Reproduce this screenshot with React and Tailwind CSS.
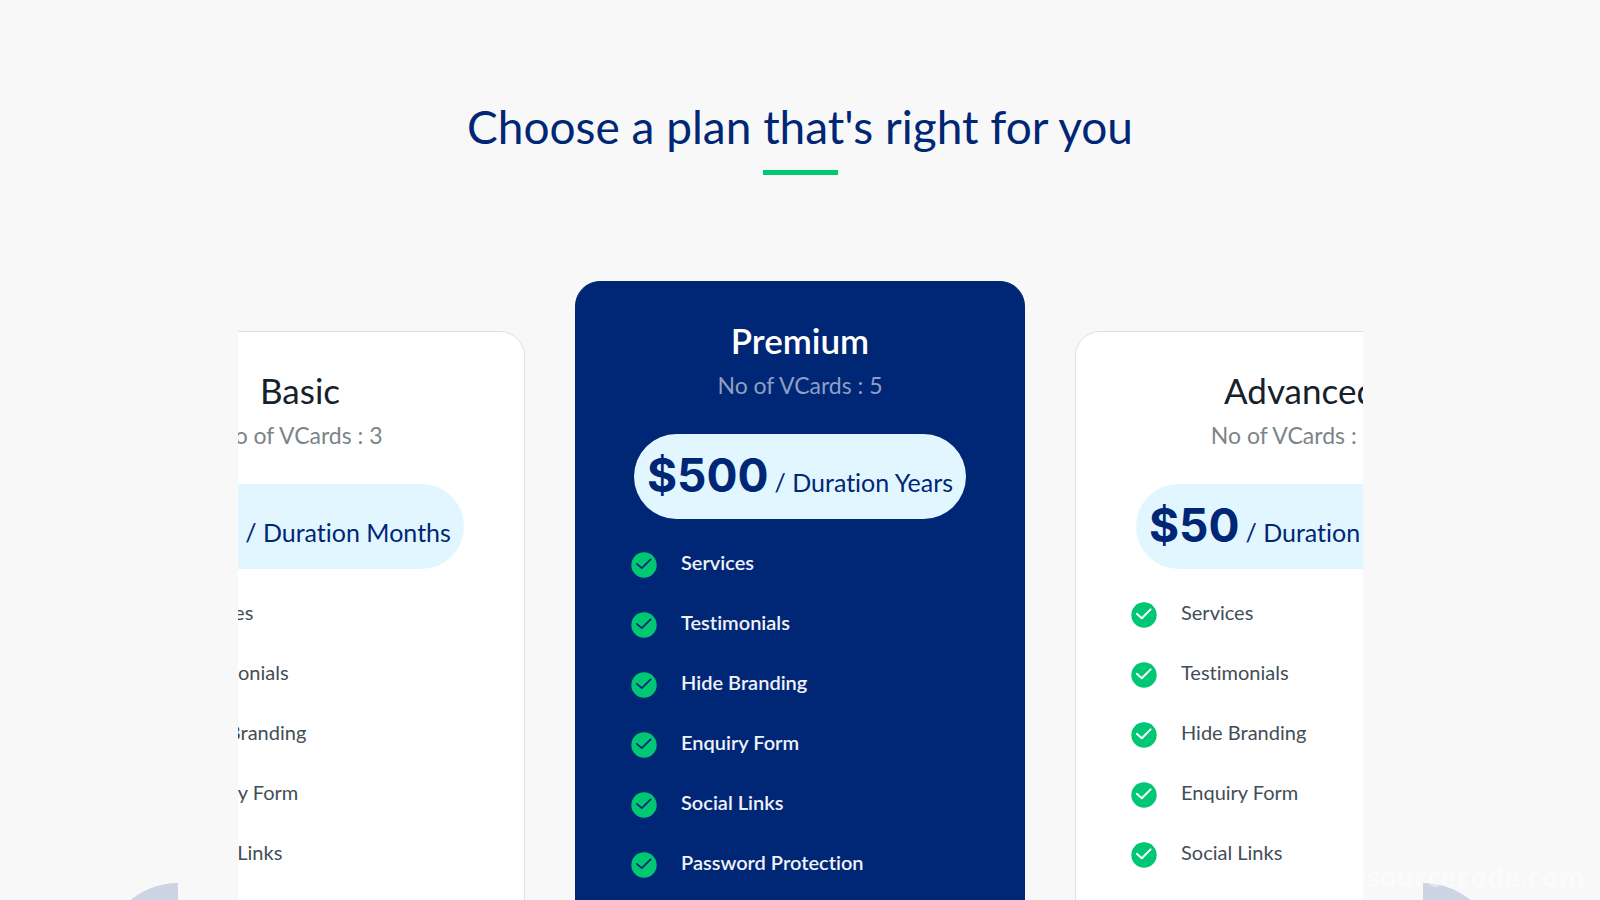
const plans = [
  {
    name: "Basic",
    cards: 3,
    price: "$20",
    duration: "Months",
    features: ["Services", "Testimonials", "Hide Branding", "Enquiry Form", "Social Links"],
  },
  {
    name: "Premium",
    cards: 5,
    price: "$500",
    duration: "Years",
    featured: true,
    features: ["Services", "Testimonials", "Hide Branding", "Enquiry Form", "Social Links", "Password Protection"],
  },
  {
    name: "Advanced",
    cards: 10,
    price: "$50",
    duration: "Months",
    features: ["Services", "Testimonials", "Hide Branding", "Enquiry Form", "Social Links"],
  },
];

function CheckIcon({ featured }) {
  return (
    <svg viewBox="0 0 26 26" className="mt-[4px] size-[26px] shrink-0" fill="none" aria-hidden="true">
      <circle cx="13" cy="13" r="12.7" fill="#00c774" />
      <path
        d="M5.8 11.8L10.8 16.2L19.6 7.4"
        className={featured ? "stroke-[#002776]" : "stroke-white"}
        strokeWidth={featured ? 1.7 : 2}
        strokeLinecap="round"
        strokeLinejoin="round"
      />
    </svg>
  );
}

function PlanCard({ plan }) {
  const f = plan.featured;
  return (
    <article
      className={
        "w-[450px] shrink-0 rounded-t-[25px] border px-[55px] pt-[37px] " +
        (f ? "border-[#002776] bg-[#002776]" : "mt-[50px] border-[#dee0e2] bg-white")
      }
    >
      <h3 className={"text-center text-[35px] leading-[42px] " + (f ? "font-semibold text-white" : "text-[#15212b]")}>
        {plan.name}
      </h3>
      <p className={"mt-[10px] text-center text-[23px] leading-[28px] " + (f ? "text-[#8f9fc4]" : "text-[#7c8489]")}>
        No of VCards : {plan.cards}
      </p>
      <div className="mt-[35px] flex justify-center">
        <p className="flex h-[85px] items-baseline gap-[6px] whitespace-nowrap rounded-full bg-[#e2f6ff] px-[13px] leading-[82px] text-[#002776]">
          <span className="font-['Inter',sans-serif] text-[46px] font-bold">{plan.price}</span>
          <span className="text-[25px]">/ Duration {plan.duration}</span>
        </p>
      </div>
      <ul className="mt-[29px]">
        {plan.features.map((name) => (
          <li key={name} className="mb-[30px] flex h-[30px] gap-[24px]">
            <CheckIcon featured={f} />
            <span className={"text-[20px] leading-[28px] " + (f ? "font-semibold text-[#f0f2f7]" : "text-[#434d56]")}>
              {name}
            </span>
          </li>
        ))}
      </ul>
    </article>
  );
}

export default function App() {
  return (
    <main className="relative h-screen overflow-hidden bg-[#f8f8f8] pt-[96px] font-['Lato',sans-serif] [font-variant-ligatures:none]">
      <h2 className="text-center text-[46px] leading-[62px] text-[#002776]">Choose a plan that's right for you</h2>
      <div className="mx-auto mt-[12px] h-[5px] w-[75px] bg-[#00c774]" />
      <section className="relative mx-auto mt-[106px] max-w-[1245px] px-[60px]">
        <button aria-label="Previous plan" className="absolute top-[602px] left-0 h-[150px] w-[75px] -translate-x-full rounded-l-full bg-[#ccd4e4]" />
        <div className="flex justify-center gap-[50px] overflow-hidden">
          {plans.map((plan) => (
            <PlanCard key={plan.name} plan={plan} />
          ))}
        </div>
        <button aria-label="Next plan" className="absolute top-[602px] right-0 h-[150px] w-[75px] translate-x-full rounded-r-full bg-[#ccd4e4]" />
      </section>
      <span className="absolute right-[15px] bottom-[5px] font-['Open_Sans',sans-serif] text-[27px] leading-[36px] font-bold text-white/45">
        mysourcecode.com
      </span>
    </main>
  );
}
